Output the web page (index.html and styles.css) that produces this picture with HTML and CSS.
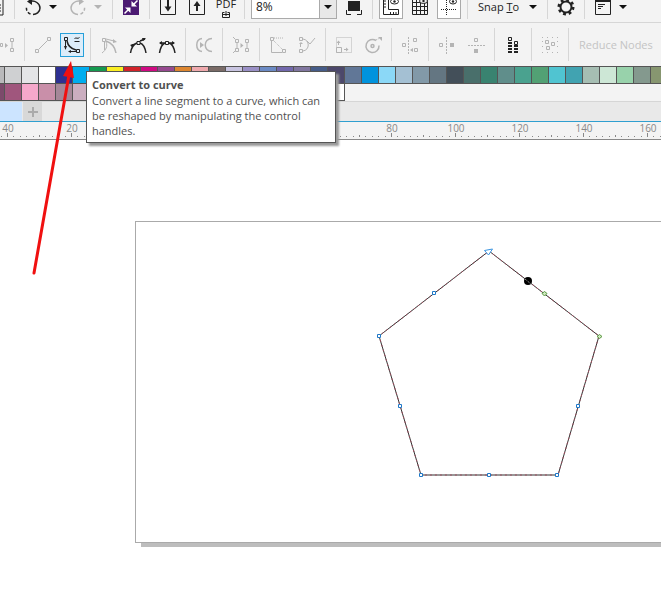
FILE: index.html
```html
<!DOCTYPE html>
<html lang="en">
<head>
    <meta charset="UTF-8">
    <title>Convert to curve</title>
    <link rel="stylesheet" href="styles.css">
</head>
<body>
    <div class="app">
        <!-- standard toolbar -->
        <div class="toolbar standard">
            <button class="btn" aria-label="Paste"><svg viewBox="0 0 24 24"><path d="M5 3h14v17H5zM9 10h8M9 13h8M9 16h8"/></svg></button>
            <span class="sep"></span>
            <div class="split">
                <button class="btn" aria-label="Undo"><svg viewBox="0 0 24 24"><path class="mid" d="M9 6.500C14 5 19 8.500 19 13S15 19.500 12 19.500"/><path class="mid" stroke-dasharray="3 2" d="M9.500 19C6.500 18 5 15 5.500 11.500"/><path class="fill" d="M6 6.500l5-3.500v7z"/></svg></button>
                <button class="caret" aria-label="Undo list"></button>
            </div>
            <div class="split off">
                <button class="btn" aria-label="Redo"><svg viewBox="0 0 24 24"><path class="mid" d="M15 6.500C10 5 5 8.500 5 13S9 19.500 12 19.500"/><path class="mid" stroke-dasharray="3 2" d="M14.500 19C17.500 18 19 15 18.500 11.500"/><path class="fill" d="M18 6.500l-5-3.500v7z"/></svg></button>
                <button class="caret" aria-label="Redo list"></button>
            </div>
            <span class="sep"></span>
            <button class="btn" aria-label="Search content"><svg viewBox="0 0 24 24"><path fill="#4b1a72" stroke="none" d="M4 2h16v18H4z"/><path stroke="#fff" stroke-width="1.500" d="M5.500 18.500l4-4M18.500 5.500l-4 4"/><path fill="#fff" stroke="none" d="M6 12.500h5.500V18zM12.500 6v5.500H18z"/></svg></button>
            <span class="sep"></span>
            <button class="btn" aria-label="Import"><svg viewBox="0 0 24 24"><path d="M4.500 2.500h15v17h-15z"/><path class="thick" d="M12 4v9"/><path class="fill" d="M8.500 11.500h7l-3.500 5z"/></svg></button>
            <button class="btn" aria-label="Export"><svg viewBox="0 0 24 24"><path d="M4.500 2.500h15v17h-15z"/><path class="thick" d="M12 9v7"/><path class="fill" d="M8.500 11h7l-3.500-5z"/></svg></button>
            <button class="btn pdf" aria-label="Publish to PDF"><span>PDF</span><svg viewBox="0 0 8 8"><path d="M2.500 2.500h-2v5h7v-5h-2M4 1v5M1 4.500h6"/></svg></button>
            <span class="sep"></span>
            <label class="zoom">
                <select aria-label="Zoom level"><option>8%</option><option>100%</option></select>
                <span class="caret"></span>
            </label>
            <button class="btn" aria-label="Full-screen preview"><svg viewBox="0 0 24 24"><path class="fill" d="M6 6h12v10H6z"/><path d="M4.500 15v4.500H9M19.500 15v4.500H15"/></svg></button>
            <span class="sep"></span>
            <button class="btn boxed" aria-label="Show rulers"><svg viewBox="0 0 24 24"><path d="M4.500 3v16.500h15v-5h-10V3M5 6h2M5 9h2M5 12h2M11.500 19v-2M14.500 19v-2M17 19v-2"/><ellipse cx="15.500" cy="6.500" rx="4" ry="2.500"/><circle class="fill" cx="15.500" cy="6.500" r="1.200"/></svg></button>
            <button class="btn" aria-label="Show grid"><svg viewBox="0 0 24 24"><path d="M4.500 3v16.500h15V3M4.500 7.500h15M4.500 11.500h15M4.500 15.500h15M8.500 3v16.500M12.500 3v16.500M16.500 3v16.500"/><ellipse class="pale" cx="15.500" cy="6" rx="4" ry="2.500"/><circle class="fill" cx="15.500" cy="6" r="1.200"/></svg></button>
            <button class="btn boxed" aria-label="Show guidelines"><svg viewBox="0 0 24 24"><path stroke-dasharray="1 1" d="M4 14.500h16M9.500 3v17"/><ellipse cx="16" cy="6.500" rx="3.500" ry="2.500"/><circle class="fill" cx="16" cy="6.500" r="1.200"/></svg></button>
            <span class="sep"></span>
            <div class="split">
                <button class="snap">Snap <u>T</u>o</button>
                <button class="caret" aria-label="Snap options"></button>
            </div>
            <span class="sep"></span>
            <button class="btn" aria-label="Options"><svg viewBox="0 0 24 24"><circle stroke-width="2" cx="12" cy="12" r="5.500"/><circle stroke-width="3" stroke-dasharray="2.750 2.750" cx="12" cy="12" r="7"/></svg></button>
            <span class="sep"></span>
            <div class="split">
                <button class="btn" aria-label="Launch"><svg viewBox="0 0 24 24"><path d="M4.500 3.500h15v16h-15zM7 9.500h7M7 11.500h5M7 13.500h3"/><path class="thick" d="M5 6h14"/></svg></button>
                <button class="caret" aria-label="Launch list"></button>
            </div>
        </div>

        <!-- node editing bar -->
        <div class="toolbar property">
            <button class="btn off" aria-label="Break curve"><svg viewBox="0 0 24 24"><path d="M16.500 5.500h3v3h-3zM16.500 15.500h3v3h-3zM6.500 10.500h2v3h-2zM18 9v6"/><path class="fill" d="M11 10v5l3-2.500z"/></svg></button>
            <span class="sep"></span>
            <button class="btn off" aria-label="Convert to line"><svg viewBox="0 0 24 24"><path d="M4.500 16.500h3v3h-3zM16.500 4.500h3v3h-3zM8 16l8-8"/></svg></button>
            <button class="btn active" aria-label="Convert to curve" aria-describedby="tip"><svg viewBox="0 0 24 24"><path d="M4.500 4.500h3v3h-3zM16.500 16.500h3v3h-3zM5.500 8v8M16 18.500H9M14.500 5.500c2-1.500 3 1 5-1M14.500 8.500h5"/><path class="mid" d="M7 8c1 5 5 8 9 9"/><path class="fill" d="M4 13h3l-1.500 4zM11 17v3l-3-1.500z"/></svg></button>
            <span class="sep"></span>
            <button class="btn off" aria-label="Cusp node"><svg viewBox="0 0 24 24"><path d="M5.500 5.500h3v3h-3zM9 9c2 4 0 8-4 11M7.500 9v8M9 6l8 2"/><path class="mid" d="M9 8c6 2 9 6 10 12"/><path class="fill" d="M16 6l4 3-4 1z"/></svg></button>
            <button class="btn" aria-label="Smooth node"><svg viewBox="0 0 24 24"><path class="mid" d="M4.500 20C5.500 14 8 11 11 10M14 10c3 1 5 4 6 10M5 13l6-3M14 8l5-2"/><path d="M11 8.500h3v3h-3z"/><path class="fill" d="M4 12l3-1v3zM20 5l-4 0 1 3z"/></svg></button>
            <button class="btn" aria-label="Symmetrical node"><svg viewBox="0 0 24 24"><path class="mid" d="M4.500 20C5.500 14 7.500 11 10 10M14 10c3 1 5 4 6 10M5 10h5M14 10h5"/><path d="M10.500 8.500h3v3h-3z"/><path class="fill" d="M4 10l3-2v4zM20 10l-3-2v4z"/></svg></button>
            <span class="sep"></span>
            <button class="btn off" aria-label="Reverse direction"><svg viewBox="0 0 24 24"><path class="mid" d="M10 5.500c-7 1-7 12 0 13M20 5.500c-9 0-9 13 0 13"/><path class="fill" d="M8 9v6l4-3z"/></svg></button>
            <span class="sep"></span>
            <button class="btn off" aria-label="Extract subpath"><svg viewBox="0 0 24 24"><path d="M6.500 6.500h3v3h-3zM6.500 15.500h3v3h-3zM16.500 6.500h3v3h-3zM16.500 15.500h3v3h-3zM8 9v6M18 9v6M4 4l2 2M4 20l2-2"/><path class="fill" d="M11.500 10v5l3-2.500z"/></svg></button>
            <span class="sep"></span>
            <button class="btn off" aria-label="Extend curve to close"><svg viewBox="0 0 24 24"><path d="M4.500 4.500h3v3h-3zM16.500 16.500h3v3h-3zM5.500 8v11.500H16"/><path stroke-dasharray="1 1" d="M8 8l9 9M8 5l9 0"/></svg></button>
            <button class="btn off" aria-label="Close curve"><svg viewBox="0 0 24 24"><path d="M4.500 4.500h3v3h-3zM4.500 16.500h3v3h-3zM8 6c7 1 7 11 0 12M12 8l3 3 5-6M5.500 14v-4"/><path class="fill" d="M4 11h4l-2-2z"/></svg></button>
            <span class="sep"></span>
            <button class="btn off" aria-label="Stretch and scale nodes"><svg viewBox="0 0 24 24"><path stroke-dasharray="1 1" d="M4.500 4.500h15v15h-15z"/><path d="M4.500 14.500h5v5h-5zM6.500 12V8M12 16.500h4"/><path class="fill" d="M4.500 10h4l-2-2.500zM14 14.500v4l2.500-2z"/></svg></button>
            <button class="btn off" aria-label="Rotate and skew nodes"><svg viewBox="0 0 24 24"><path class="mid" d="M15 7.500a6.500 6.500 0 1 0 3 5"/><circle class="mid" cx="11.500" cy="13" r="1.500"/><path stroke-dasharray="1 1" d="M15 7l4-2"/><path class="fill" d="M17 4h4v4z"/></svg></button>
            <span class="sep"></span>
            <button class="btn off" aria-label="Align nodes"><svg viewBox="0 0 24 24"><path d="M4.500 10.500h3v3h-3zM15.500 5.500h3v3h-3zM16.500 15.500h3v3h-3z"/><path stroke-dasharray="2 1" d="M10.500 4v17"/><path class="fill" d="M12 17l3-2v4z"/></svg></button>
            <span class="sep"></span>
            <button class="btn off" aria-label="Reflect nodes horizontally"><svg viewBox="0 0 24 24"><path d="M4.500 10.500h3v3h-3z"/><path class="fill" d="M15 10h4v4h-4z"/><path stroke-dasharray="2 1" d="M11.500 4v17"/></svg></button>
            <button class="btn off" aria-label="Reflect nodes vertically"><svg viewBox="0 0 24 24"><path d="M10.500 5.500h3v3h-3z"/><path class="fill" d="M10 16h4v4h-4z"/><path stroke-dasharray="2 1" d="M4 12.500h17"/></svg></button>
            <span class="sep"></span>
            <button class="btn" aria-label="Elastic mode"><svg viewBox="0 0 24 24"><path d="M7.500 4.500h3v3h-3zM13.500 8.500h3v3h-3z"/><path stroke-width="4" stroke-dasharray="2 1" d="M9 9v11M15 12v8"/></svg></button>
            <span class="sep"></span>
            <button class="btn off" aria-label="Select all nodes"><svg viewBox="0 0 24 24"><path stroke-dasharray="1 4" d="M4 4.500h17M4 19.500h17M4.500 8v10M19.500 8v10"/><path d="M7.500 7.500h3v3h-3zM13.500 9.500h3v3h-3zM8.500 13.500h3v3h-3z"/></svg></button>
            <span class="sep"></span>
            <button class="reduce" disabled>Reduce Nodes</button>
        </div>

        <div class="palette" id="palette1"></div>
        <div class="palette second" id="palette2"></div>

        <div class="tabs">
            <button class="tab" aria-label="Document"></button>
            <button class="add" aria-label="New document"><svg viewBox="0 0 12 12"><path d="M6 1v10M1 6h10"/></svg></button>
        </div>

        <div class="ruler">
            <svg class="ticks">
                <defs>
                    <pattern id="tick" x="7" width="64" height="6" patternUnits="userSpaceOnUse">
                        <path d="M.5 0v4M6.500 3v1M13.500 3v1M19.500 3v1M26.500 3v1M32.500 2v2M38.500 3v1M45.500 3v1M51.500 3v1M58.500 3v1"/>
                    </pattern>
                </defs>
                <rect width="100%" height="6" fill="url(#tick)"/>
            </svg>
            <div class="labels" id="labels"></div>
        </div>

        <div class="canvas">
            <div class="page">
                <svg class="shape">
                    <path class="base" d="M353 29l110 85-41 139H285l-42-139z"/>
                    <path class="dash" d="M353 29l110 85-41 139H285l-42-139z"/>
                    <path class="node" d="M241.500 112.500h3v3h-3zM296.500 69.500h3v3h-3zM262.500 182.500h3v3h-3zM283.500 251.500h3v3h-3zM351.500 251.500h3v3h-3zM419.500 251.500h3v3h-3zM440.500 182.500h3v3h-3z"/>
                    <path class="start" d="M348.500 28.500l8-1.500-4 6z"/>
                    <path class="green" d="M406 71.500l2.500-2 2.500 2-2.500 2.500zM461 114.500l2.500-2 2.500 2-2.500 2z"/>
                    <circle cx="392" cy="59" r="4"/>
                    <path stroke="#bbb" stroke-dasharray="1 1" d="M389 57l6 5"/>
                </svg>
            </div>
        </div>

        <div class="tooltip" id="tip" role="tooltip">
            <strong>Convert to curve</strong>
            <p>Convert a line segment to a curve, which can be reshaped by manipulating the control handles.</p>
        </div>
        <svg class="pointer" viewBox="0 0 50 216">
            <path stroke="#f01010" stroke-width="3" stroke-linecap="round" d="M5 212L40 14"/>
            <path fill="#f01010" d="M42 0l3 17-11-2z"/>
        </svg>
    </div>
    <script src="script.js"></script>
</body>
</html>
```
FILE: styles.css
```css
*{
    margin: 0;
    padding: 0;
    box-sizing: border-box;
}
body{
    background: #fff;
    color: #222;
    font: 11px/14px "Open Sans", "Noto Sans", sans-serif;
}
button, select{
    font: inherit;
    color: inherit;
    border: 0;
    background: none;
}
svg{
    display: block;
    fill: none;
}
.app{
    position: relative;
    min-height: 100vh;
    overflow: hidden;
    background: #fff;
}
/*toolbars*/
.toolbar{
    display: flex;
    align-items: center;
    gap: 5px;
    background: #f3f3f3;
    white-space: nowrap;
}
.toolbar > *{
    flex-shrink: 0;
}
.standard{
    margin-top: -5px;
    padding-bottom: 3px;
    border-bottom: 1px solid #d6d6d6;
}
.standard > :first-child{
    margin-left: -16px;
}
.property{
    height: 43px;
}
.property > :first-child{
    margin-left: -6px;
}
.sep{
    width: 1px;
    height: 24px;
    margin: 0 1px;
    background: #d6d6d6;
}
.property .sep{
    height: 33px;
}
.btn{
    width: 24px;
    height: 24px;
}
.btn svg{
    width: 24px;
    height: 24px;
    stroke: currentColor;
}
.btn .fill{
    fill: currentColor;
    stroke: none;
}
.btn .pale{
    fill: #f3f3f3;
}
.btn .thick{
    stroke-width: 2;
}
.btn .mid{
    stroke-width: 1.5;
}
.off{
    color: #b4b4b4;
}
.boxed{
    border: 1px solid #aaa;
    background: #fff;
}
.boxed svg, .active svg{
    margin: -1px;
}
.active{
    border: 1px solid #26a0da;
    background: #dcedfa;
}
.split{
    display: flex;
    align-items: center;
}
.caret{
    display: flex;
    align-items: center;
    justify-content: center;
    width: 16px;
    height: 24px;
}
.caret::after{
    content: "";
    border: 4px solid transparent;
    border-top-color: #111;
    border-bottom: 0;
}
.off .caret::after{
    border-top-color: #b4b4b4;
}
.pdf{
    display: flex;
    flex-direction: column;
    align-items: center;
    line-height: 12px;
    padding-top: 3px;
}
.pdf svg{
    width: 8px;
    height: 8px;
}
.zoom{
    display: grid;
    grid-template-columns: 67px 17px;
    border: 1px solid #aaa;
    background: #fff;
    height: 24px;
}
.zoom select{
    grid-area: 1 / 1 / 2 / 3;
    appearance: none;
    padding-left: 4px;
    font-size: 12px;
}
.zoom .caret{
    grid-area: 1 / 2;
    width: 17px;
    height: 22px;
    border-left: 1px solid #aaa;
    background: #e8e8e8;
    pointer-events: none;
}
.snap{
    width: 51px;
    height: 24px;
    padding-left: 4px;
    text-align: left;
}
.reduce{
    padding-left: 4px;
    color: #c4c4c4;
}
/*palettes*/
.palette{
    display: flex;
    height: 18px;
    overflow: hidden;
    background: #f3f3f3;
    border: solid #555;
    border-width: 1px 0;
}
.second{
    height: 17px;
    border: 0;
}
.swatch{
    flex: 0 0 17px;
    border-right: 1px solid #555;
}
.second .swatch{
    border-bottom: 1px solid #555;
}
.swatch:first-child{
    margin-left: -12px;
}
/*document tabs*/
.tabs{
    display: flex;
    align-items: center;
    gap: 1px;
    height: 21px;
    background: #e9e9e9;
    border-top: 1px solid #d6d6d6;
    border-bottom: 1px solid #2f9fd0;
}
.tab{
    width: 22px;
    height: 19px;
    background: #cce4ff;
}
.add{
    display: grid;
    place-items: center;
    width: 19px;
    height: 19px;
    background: #d8d8d8;
}
.add svg{
    width: 12px;
    height: 12px;
    stroke: #aaa;
    stroke-width: 2;
}
/*ruler*/
.ruler{
    display: grid;
    height: 18px;
    overflow: hidden;
    background: #f3f3f3;
    border-bottom: 1px solid #888;
}
.ticks, .labels{
    grid-area: 1 / 1;
}
.ticks{
    width: 100%;
    height: 6px;
    align-self: end;
    stroke: #888;
}
.ticks rect{
    stroke: none;
}
.labels{
    display: flex;
    margin-left: -24px;
    color: #888;
    font-size: 10px;
    line-height: 12px;
    min-width: 0;
}
.labels span{
    flex: 0 0 64px;
    text-align: center;
}
/*canvas*/
.canvas{
    padding: 81px 0 50px 135px;
    background: #fff;
}
.page{
    height: 322px;
    border: 1px solid #aaa;
    border-right: 0;
    box-shadow: 6px 4px 0 #bdbdbd;
    background: #fff;
}
.shape{
    width: 100%;
    height: 320px;
}
.base{
    stroke: #333;
}
.dash{
    stroke: #a05060;
    stroke-dasharray: 2 3;
}
.node{
    fill: #fff;
    stroke: #1f78c8;
}
.start{
    fill: #fff;
    stroke: #3a94e0;
}
.green{
    fill: #cfe8c0;
    stroke: #5a9a40;
}
.shape circle{
    fill: #000;
}
/*things above the canvas*/
.tooltip{
    position: absolute;
    left: 86px;
    top: 71px;
    width: 250px;
    padding: 5px 4px 4px 5px;
    border: 1px solid #555;
    background: #fff;
    color: #505050;
    line-height: 15px;
    box-shadow: 3px 3px 2px #999;
}
.tooltip strong{
    display: block;
    line-height: 16px;
}
.pointer{
    position: absolute;
    left: 29px;
    top: 61px;
    width: 50px;
    height: 216px;
}
```
FILE: script.js
```javascript
var row1 = ["#b9b9bb", "#cfd0d2", "#e4e5e7", "#ffffff", "#2e3092", "#00adef", "#159a50", "#fbee23",
        "#d2232a", "#cf0a82", "#96498f", "#dd8630", "#efa9ad", "#7a6b67", "#c8c4e0", "#9a90c6",
        "#6b8ac4", "#7268ac", "#80769f", "#465c88", "#4c486b", "#617797", "#0093dd", "#8bd8f7",
        "#a4c0d3", "#8299a8", "#647682", "#434f59", "#496f6b", "#398370", "#608e8b", "#4aa28f",
        "#52a174", "#50c4d1", "#41a3b1", "#a6beb3", "#cde7d6", "#98d2ab", "#84998e", "#879670"],
    row2 = ["#7c4a6b", "#a0567d", "#f5a8cb", "#c98fa9", "#a58798", "#cbaec0"];
//the rest of the second row is empty
while(row2.length < 21){
    row2.push("#ffffff");
}
function fillPalette(id, colors){
    var box = document.getElementById(id);
    colors.forEach(function(color){
        var b = document.createElement("button");
        b.className = "swatch";
        b.style.background = color;
        b.setAttribute("aria-label", color);
        box.appendChild(b);
    });
}
fillPalette("palette1", row1);
fillPalette("palette2", row2);

//ruler numbers, 20 units every 64px, none where the tooltip lies
var labels = document.getElementById("labels");
for(var n = -40; n <= 160; n += 20){
    var s = document.createElement("span");
    s.textContent = n < 0 || n > 60 ? Math.abs(n) : "";
    labels.appendChild(s);
}
```
